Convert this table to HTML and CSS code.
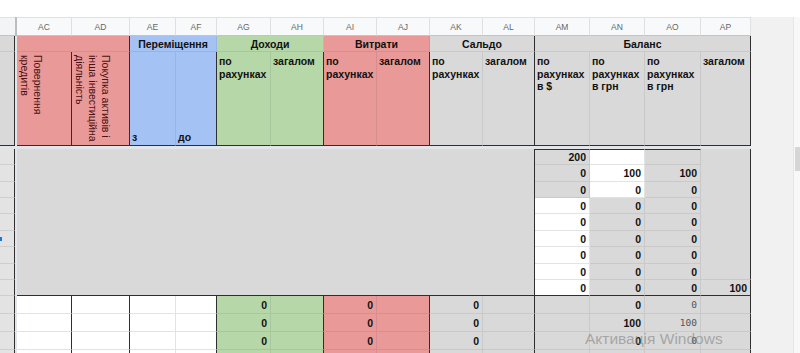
FILE: index.html
```html
<!DOCTYPE html>
<html lang="uk">
<head>
<meta charset="utf-8">
<title>Sheet</title>
<link rel="stylesheet" href="styles.css">
</head>
<body>
<div class="screen">
  <div class="sheet">
    <div class="filler"></div>
    <div class="vscroll"><div class="thumb"></div></div>
    <div class="vbar vbar-top"></div>
    <div class="hbar"></div>
    <div class="vbar vbar-bottom"></div>

    <div class="row colhdrs">
      <div class="corner"></div>
      <div class="corner-bar"></div>
      <div class="ch">AC</div><div class="ch">AD</div><div class="ch">AE</div><div class="ch">AF</div>
      <div class="ch">AG</div><div class="ch">AH</div><div class="ch">AI</div><div class="ch">AJ</div>
      <div class="ch">AK</div><div class="ch">AL</div><div class="ch">AM</div><div class="ch">AN</div>
      <div class="ch">AO</div><div class="ch">AP</div>
    </div>

    <div class="row groups">
      <div class="c frz frz-dark"></div>
      <div class="c red span2 dr"></div>
      <div class="c blue span2 grp">Переміщення</div>
      <div class="c green span2 grp">Доходи</div>
      <div class="c red span2 grp">Витрати</div>
      <div class="c gray span2 grp dr">Сальдо</div>
      <div class="c gray span4 grp dr">Баланс</div>
    </div>

    <div class="row labels">
      <div class="c frz frz-dark"></div>
      <div class="c red rot dr"><span class="rtext">Повернення<br>кредитів</span></div>
      <div class="c red rot dr"><span class="rtext">Покупка активів і<br>інша інвестиційна<br>діяльність</span></div>
      <div class="c blue lbl bottom">з</div>
      <div class="c blue lbl bottom dr">до</div>
      <div class="c green lbl">по<br>рахунках</div>
      <div class="c green lbl dr">загалом</div>
      <div class="c red lbl">по<br>рахунках</div>
      <div class="c red lbl dr">загалом</div>
      <div class="c gray lbl">по<br>рахунках</div>
      <div class="c gray lbl dr">загалом</div>
      <div class="c gray lbl">по<br>рахунках<br>в $</div>
      <div class="c gray lbl">по<br>рахунках<br>в грн</div>
      <div class="c gray lbl">по<br>рахунках<br>в грн</div>
      <div class="c gray lbl dr">загалом</div>
    </div>

    <div class="row data">
      <div class="c frz"></div>
      <div class="c gray block dr"></div>
      <div class="c gray n top">200</div>
      <div class="c white n top"></div>
      <div class="c gray n top"></div>
      <div class="c gray apblock dr"></div>
    </div>
    <div class="row data">
      <div class="c frz"></div>
      <div class="c gray n">0</div><div class="c white n">100</div><div class="c gray n">100</div>
    </div>
    <div class="row data">
      <div class="c frz"></div>
      <div class="c gray n">0</div><div class="c white n">0</div><div class="c gray n">0</div>
    </div>
    <div class="row data">
      <div class="c frz"></div>
      <div class="c white n">0</div><div class="c gray n">0</div><div class="c gray n">0</div>
    </div>
    <div class="row data">
      <div class="c frz"></div>
      <div class="c white n">0</div><div class="c gray n">0</div><div class="c gray n">0</div>
    </div>
    <div class="row data">
      <div class="c frz"><span class="marker"></span></div>
      <div class="c white n">0</div><div class="c gray n">0</div><div class="c gray n">0</div>
    </div>
    <div class="row data">
      <div class="c frz"></div>
      <div class="c white n">0</div><div class="c gray n">0</div><div class="c gray n">0</div>
    </div>
    <div class="row data">
      <div class="c frz"></div>
      <div class="c white n">0</div><div class="c gray n">0</div><div class="c gray n">0</div>
    </div>
    <div class="row data last">
      <div class="c frz"></div>
      <div class="c white n">0</div><div class="c gray n">0</div><div class="c gray n">0</div>
      <div class="c gray n dr">100</div>
    </div>

    <div class="row totals">
      <div class="c frz"></div>
      <div class="c white dr"></div><div class="c white dr"></div><div class="c white"></div><div class="c white dr"></div>
      <div class="c green n">0</div><div class="c green dr"></div>
      <div class="c red n">0</div><div class="c red dr"></div>
      <div class="c gray n">0</div><div class="c gray dr"></div>
      <div class="c gray"></div><div class="c gray n">0</div><div class="c gray n mono">0</div><div class="c gray dr"></div>
    </div>
    <div class="row totals">
      <div class="c frz"></div>
      <div class="c white dr"></div><div class="c white dr"></div><div class="c white"></div><div class="c white dr"></div>
      <div class="c green n">0</div><div class="c green dr"></div>
      <div class="c red n">0</div><div class="c red dr"></div>
      <div class="c gray n">0</div><div class="c gray dr"></div>
      <div class="c gray"></div><div class="c gray n">100</div><div class="c gray n mono">100</div><div class="c gray dr"></div>
    </div>
    <div class="row totals">
      <div class="c frz"></div>
      <div class="c white dr"></div><div class="c white dr"></div><div class="c white"></div><div class="c white dr"></div>
      <div class="c green n">0</div><div class="c green dr"></div>
      <div class="c red n">0</div><div class="c red dr"></div>
      <div class="c gray n">0</div><div class="c gray dr"></div>
      <div class="c gray"></div><div class="c gray n">0</div><div class="c gray n mono">0</div><div class="c gray dr"></div>
    </div>
    <div class="row totals">
      <div class="c frz"></div>
      <div class="c white dr"></div><div class="c white dr"></div><div class="c white"></div><div class="c white dr"></div>
      <div class="c green"></div><div class="c green dr"></div>
      <div class="c red"></div><div class="c red dr"></div>
      <div class="c gray"></div><div class="c gray dr"></div>
      <div class="c gray"></div><div class="c gray"></div><div class="c gray"></div><div class="c gray dr"></div>
    </div>
  </div>

  <div class="watermark">Активація Windows</div>
</div>
</body>
</html>
```

FILE: styles.css
```css
:root {
  --red: #ea9999;
  --blue: #a4c2f4;
  --green: #b6d7a8;
  --gray: #d9d9d9;
  --dark: #2f2f2f;
  --grid: rgba(0, 0, 0, 0.07);
}

html, body {
  margin: 0;
  padding: 0;
  background: #ffffff;
}

body {
  width: 800px;
  height: 353px;
  overflow: hidden;
  font-family: "Liberation Sans", Arial, sans-serif;
}

.screen {
  position: relative;
  width: 800px;
  height: 353px;
  overflow: hidden;
}

.sheet {
  margin-top: 17px;
  display: grid;
  grid-template-columns: 15px 2px 55px 58px 46px 41px 54px 53px 53px 53px 53px 52px 55px 55px 56px 50px 42px 7px;
  grid-template-rows: 19px 16px 94px 3px 16px 17px 16px 16px 17px 16px 17px 16px 16px 18px 18px 18px 18px;
}

.row { display: contents; }

/* fixed structural pieces */
.filler {
  grid-column: 17;
  grid-row: 1 / -1;
  background: #f1f1f1;
}
.vscroll {
  grid-column: 18;
  grid-row: 1 / -1;
  background: #f8f8f8;
  border-left: 1px solid #e6e6e6;
  display: flex;
  flex-direction: column;
}
.thumb {
  margin-top: 130px;
  margin-left: 1px;
  height: 24px;
  background: #d6d6d6;
}
.vbar {
  grid-column: 2;
  background: #e2e5e9;
}
.vbar-top { grid-row: 2 / 4; }
.vbar-bottom { grid-row: 5 / -1; }
.hbar {
  grid-column: 1 / 17;
  grid-row: 4;
  background: #e2e5e9;
}

/* column headers */
.corner {
  background: #f3f4f5;
  border-top: 1px solid #e0e0e0;
  border-bottom: 1px solid #c4c4c4;
  box-sizing: border-box;
}
.corner-bar {
  background: #bdbdbd;
}
.ch {
  box-sizing: border-box;
  background: #f8f9fa;
  border-top: 1px solid #e0e0e0;
  border-right: 1px solid #e0e0e0;
  border-bottom: 1px solid #c4c4c4;
  color: #666666;
  font-size: 8.5px;
  display: flex;
  align-items: center;
  justify-content: center;
}

/* cells */
.c {
  box-sizing: border-box;
  border-right: 1px solid var(--grid);
  border-bottom: 1px solid var(--grid);
  font-size: 10.5px;
  font-weight: bold;
  color: #111111;
  overflow: hidden;
  white-space: nowrap;
}
.red { background: var(--red); }
.blue { background: var(--blue); }
.green { background: var(--green); }
.gray { background: var(--gray); }
.white { background: #ffffff; border-right-color: #e2e3e3; border-bottom-color: #e2e3e3; }

.dr { border-right-color: var(--dark); }

.frz {
  background: #e3e3e3;
  border-right-color: var(--dark);
  border-bottom-color: #cfcfcf;
  display: flex;
  align-items: center;
}
.frz-dark { background: #d9d9d9; border-bottom-color: rgba(0,0,0,0.07); }
.labels .frz { border-bottom-color: var(--dark); }

.marker {
  width: 2px;
  height: 4px;
  background: #1a73e8;
}

.span2 { grid-column: span 2; }
.span4 { grid-column: span 4; }

.grp {
  display: flex;
  align-items: center;
  justify-content: center;
  padding-top: 1px;
}

.labels .c { border-bottom-color: var(--dark); }

.lbl {
  padding: 3px 2px 0 2px;
  line-height: 12.7px;
}
.bottom {
  display: flex;
  align-items: flex-end;
  padding-bottom: 1px;
}

.rot {
  display: flex;
  align-items: flex-start;
  padding: 3px 1px 0 1px;
}
.rtext {
  writing-mode: vertical-rl;
  font-weight: normal;
  font-size: 10.5px;
  line-height: 13px;
  color: #4a1212;
}

.n {
  display: flex;
  align-items: center;
  justify-content: flex-end;
  padding-right: 3px;
}
.top { border-top: 1px solid var(--dark); }

.block {
  grid-column: span 10;
  grid-row: span 9;
  border-bottom-color: var(--dark);
}
.apblock {
  grid-row: span 8;
}
.data.last .c { border-bottom-color: var(--dark); }
.data.last .frz { border-bottom-color: #cfcfcf; }

.mono {
  font-family: "DejaVu Sans Mono", "Liberation Mono", monospace;
  font-weight: normal;
  font-size: 9.5px;
  color: #555555;
}

/* Windows activation watermark overlay */
.watermark {
  position: absolute;
  left: 585px;
  top: 329px;
  color: rgba(120, 120, 120, 0.55);
  font-family: "Liberation Sans", Arial, sans-serif;
  font-size: 15.5px;
  line-height: 20px;
  white-space: nowrap;
  pointer-events: none;
}
```
